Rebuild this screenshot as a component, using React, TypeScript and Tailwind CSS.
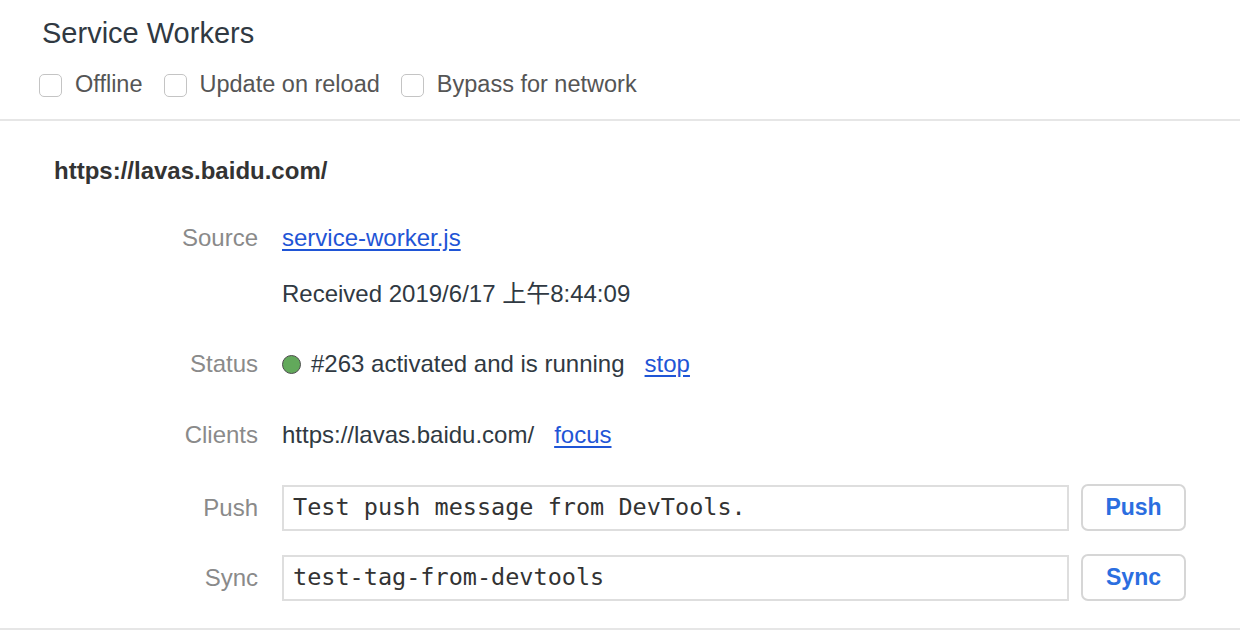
import React from "react";

const sans = { fontFamily: '"Liberation Sans", "Noto Sans CJK SC", Arial, sans-serif' };

const Checkbox: React.FC<{ label: string }> = ({ label }) => (
  <label className="flex items-center gap-[13px]">
    <span className="w-[23px] h-[23px] rounded-[5px] border border-[#c4c4c4] bg-white" />
    <span className="text-[23.5px] text-[#555]">{label}</span>
  </label>
);

const Row: React.FC<{ label?: string; className?: string; children: React.ReactNode }> = ({
  label,
  className = "",
  children,
}) => (
  <div className={`flex items-center ${className}`}>
    <div className="w-[204px] shrink-0 text-right text-[24px] text-[#8a8a8a]">{label}</div>
    <div className="flex-1 flex items-center ml-[24px] min-w-0">{children}</div>
  </div>
);

const ActionRow: React.FC<{ label: string; value: string; button: string; className?: string }> = ({
  label,
  value,
  button,
  className = "",
}) => (
  <Row label={label} className={className}>
    <div className="flex-1 h-[46px] border-2 border-[#dedede] flex items-center px-[9px] bg-white">
      <span
        className="text-[23.5px] text-[#333]"
        style={{ fontFamily: '"DejaVu Sans Mono", "Liberation Mono", monospace' }}
      >
        {value}
      </span>
    </div>
    <button className="ml-[12px] w-[105px] h-[47px] rounded-[7px] border-2 border-[#d6d6d6] bg-white text-[23px] font-bold text-[#2b6ee0]">
      {button}
    </button>
  </Row>
);

export default function App() {
  return (
    <div className="w-[1240px] h-[632px] bg-white overflow-hidden" style={sans}>
      {/* Header */}
      <div className="pl-[42px] pt-[16px] pb-[17px]">
        <h1 className="text-[29px] leading-[34px] text-[#303942]">Service Workers</h1>
        <div className="mt-[18px] h-[34px] flex items-center gap-[21px] -ml-[3px]">
          <Checkbox label="Offline" />
          <Checkbox label="Update on reload" />
          <Checkbox label="Bypass for network" />
        </div>
      </div>
      <div className="h-[2px] bg-[#e6e6e6]" />

      {/* Registration */}
      <div className="pl-[54px] pr-[54px] pt-[30px] pb-[27px]">
        <div className="h-[40px] flex items-center text-[24px] font-bold text-[#333]">
          https://lavas.baidu.com/
        </div>

        <Row label="Source" className="h-[40px] mt-[27px]">
          <a href="#" className="text-[24px] text-[#1f55d6] underline underline-offset-[3px]">
            service-worker.js
          </a>
        </Row>

        <Row className="h-[40px] mt-[16px]">
          <span className="text-[24px] text-[#303942]">Received 2019/6/17 上午8:44:09</span>
        </Row>

        <Row label="Status" className="h-[40px] mt-[30px]">
          <span className="w-[19px] h-[19px] rounded-full bg-[#62a95b] border border-[#4d4d4d] mr-[10px]" />
          <span className="text-[24px] text-[#303942]">#263 activated and is running</span>
          <a href="#" className="ml-[20px] text-[24px] text-[#1f55d6] underline underline-offset-[3px]">
            stop
          </a>
        </Row>

        <Row label="Clients" className="h-[40px] mt-[31px]">
          <span className="text-[24px] text-[#303942]">https://lavas.baidu.com/</span>
          <a href="#" className="ml-[20px] text-[24px] text-[#1f55d6] underline underline-offset-[3px]">
            focus
          </a>
        </Row>

        <ActionRow label="Push" value="Test push message from DevTools." button="Push" className="h-[47px] mt-[29px]" />
        <ActionRow label="Sync" value="test-tag-from-devtools" button="Sync" className="h-[47px] mt-[23px]" />
      </div>
      <div className="h-[2px] bg-[#e6e6e6]" />
    </div>
  );
}
